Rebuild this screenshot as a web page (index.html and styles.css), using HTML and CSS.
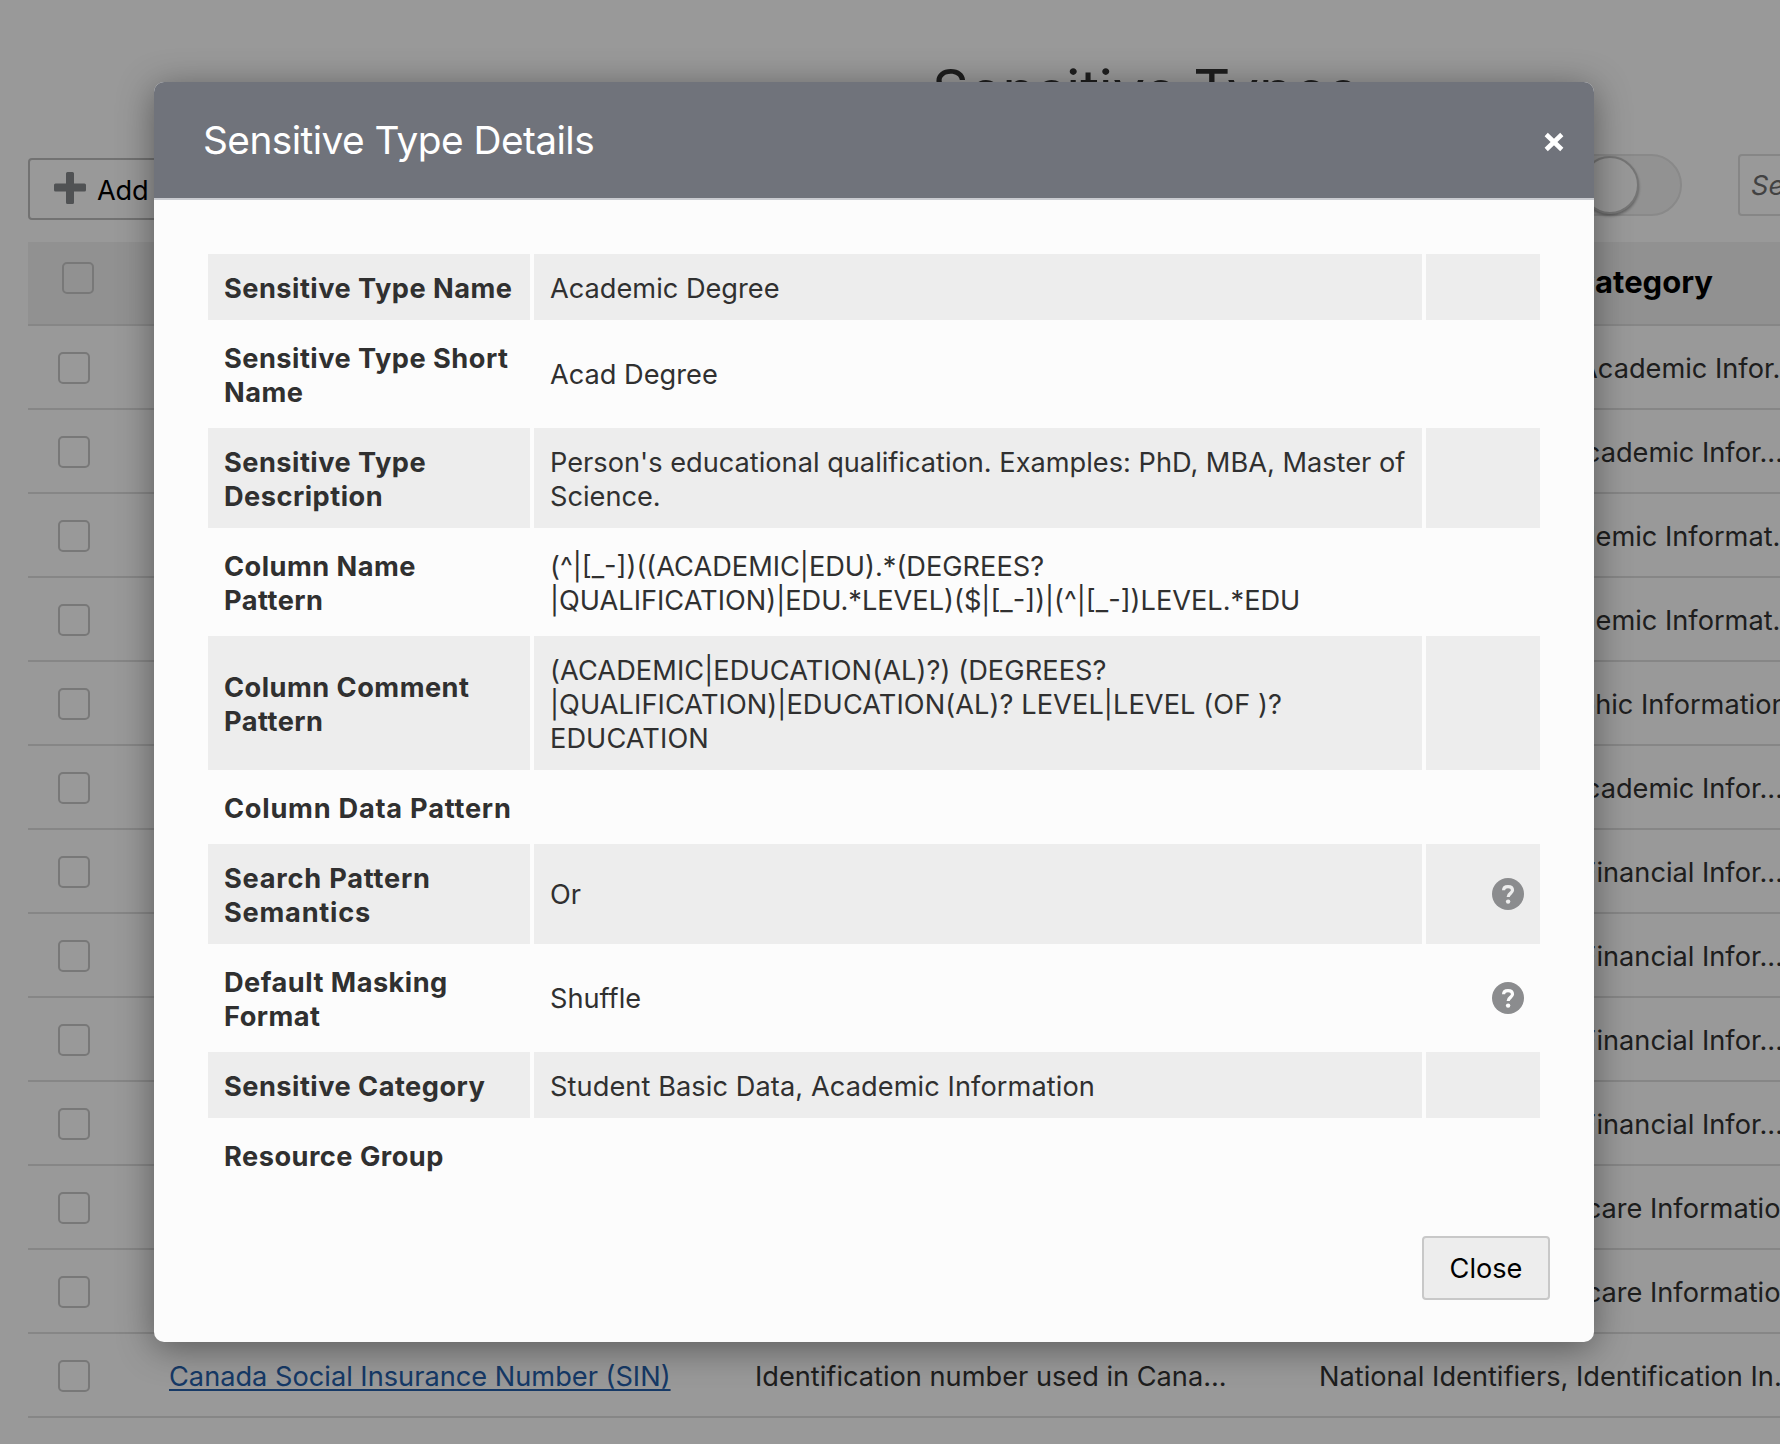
FILE: index.html
```html
<!DOCTYPE html>
<html lang="en">
<head>
<meta charset="utf-8">
<title>Sensitive Types</title>
<link rel="stylesheet" href="styles.css">
</head>
<body>
<main class="page">
  <h1 class="page-title">Sensitive Types</h1>
  <div class="toolbar">
    <button class="add-btn"><svg width="32" height="32" viewBox="0 0 32 32"><path d="M13.500 0h5a1.500 1.500 0 0 1 1.500 1.500V11.500h10.500a1.500 1.500 0 0 1 1.500 1.500v5a1.500 1.500 0 0 1-1.500 1.500H20V30.500a1.500 1.500 0 0 1-1.500 1.500h-5a1.500 1.500 0 0 1-1.500-1.500V19.500H1.500A1.500 1.500 0 0 1 0 18v-5a1.500 1.500 0 0 1 1.500-1.500H12V1.500A1.500 1.500 0 0 1 13.500 0z" fill="#85898c"/></svg><span>Add</span></button>
    <div class="toggle"><span class="knob"></span></div>
    <div class="search">Search</div>
  </div>
  <div class="list">
    <div class="list-head"><span class="check"></span><span class="head-cat">Category</span></div>
    <div class="list-row"><span class="check"></span><span class="cat"><span class="lead at-a">Academic </span>Infor...</span></div>
    <div class="list-row"><span class="check"></span><span class="cat"><span class="lead at-b">Academic </span>Infor...</span></div>
    <div class="list-row"><span class="check"></span><span class="cat"><span class="lead at-c">Academic </span>Informat...</span></div>
    <div class="list-row"><span class="check"></span><span class="cat"><span class="lead at-c">Academic </span>Informat...</span></div>
    <div class="list-row"><span class="check"></span><span class="cat"><span class="lead at-d">Demographic </span>Information</span></div>
    <div class="list-row"><span class="check"></span><span class="cat"><span class="lead at-b">Academic </span>Infor...</span></div>
    <div class="list-row"><span class="check"></span><span class="cat"><span class="lead at-b">Financial </span>Infor...</span></div>
    <div class="list-row"><span class="check"></span><span class="cat"><span class="lead at-b">Financial </span>Infor...</span></div>
    <div class="list-row"><span class="check"></span><span class="cat"><span class="lead at-b">Financial </span>Infor...</span></div>
    <div class="list-row"><span class="check"></span><span class="cat"><span class="lead at-b">Financial </span>Infor...</span></div>
    <div class="list-row"><span class="check"></span><span class="cat"><span class="lead at-e">Healthcare </span>Information</span></div>
    <div class="list-row"><span class="check"></span><span class="cat"><span class="lead at-e">Healthcare </span>Information</span></div>
    <div class="list-row"><span class="check"></span><a class="name">Canada Social Insurance Number (SIN)</a><span class="desc">Identification number used in Cana...</span><span class="cat ident">National Identifiers, Identification In...</span></div>
  </div>
</main>
<div class="overlay">
  <section class="dialog">
    <header class="dialog-head">
      <h2 class="dialog-title">Sensitive Type Details</h2>
      <svg class="dialog-x" width="22" height="22" viewBox="0 0 22 22"><path d="M3.200 3.500l15.600 15M18.800 3.500l-15.600 15" stroke="#fff" stroke-width="4.600" fill="none"/></svg>
    </header>
    <div class="details">
      <div class="row shade"><div class="label">Sensitive Type Name</div><div class="value">Academic Degree</div><div class="help"></div></div>
      <div class="row mid"><div class="label">Sensitive Type Short<br>Name</div><div class="value">Acad Degree</div><div class="help"></div></div>
      <div class="row shade"><div class="label">Sensitive Type<br>Description</div><div class="value">Person's educational qualification. Examples: PhD, MBA, Master of<br>Science.</div><div class="help"></div></div>
      <div class="row"><div class="label">Column Name<br>Pattern</div><div class="value">(^|[_-])((ACADEMIC|EDU).*(DEGREES?<br>|QUALIFICATION)|EDU.*LEVEL)($|[_-])|(^|[_-])LEVEL.*EDU</div><div class="help"></div></div>
      <div class="row shade"><div class="label">Column Comment<br>Pattern</div><div class="value roomy">(ACADEMIC|EDUCATION(AL)?) (DEGREES?<br>|QUALIFICATION)|EDUCATION(AL)? LEVEL|LEVEL (OF )?<br>EDUCATION</div><div class="help"></div></div>
      <div class="row"><div class="label wide">Column Data Pattern</div><div class="value"></div><div class="help"></div></div>
      <div class="row shade mid"><div class="label wide">Search Pattern<br>Semantics</div><div class="value">Or</div><div class="help"><svg width="32" height="32" viewBox="0 0 32 32"><circle cx="16" cy="16" r="16" fill="#8b8c8e"/><path d="M11.600 12.300C11.600 9.900 13.400 8.700 16 8.700s4.500 1.300 4.500 3.600c0 3-4.300 3.200-4.300 6.600" fill="none" stroke="#ededed" stroke-width="3.200"/><circle cx="16.100" cy="23.600" r="2.200" fill="#ededed"/></svg></div></div>
      <div class="row mid"><div class="label">Default Masking<br>Format</div><div class="value">Shuffle</div><div class="help"><svg width="32" height="32" viewBox="0 0 32 32"><circle cx="16" cy="16" r="16" fill="#8b8c8e"/><path d="M11.600 12.300C11.600 9.900 13.400 8.700 16 8.700s4.500 1.300 4.500 3.600c0 3-4.300 3.200-4.300 6.600" fill="none" stroke="#fcfcfc" stroke-width="3.200"/><circle cx="16.100" cy="23.600" r="2.200" fill="#fcfcfc"/></svg></div></div>
      <div class="row shade"><div class="label">Sensitive Category</div><div class="value roomy">Student Basic Data, Academic Information</div><div class="help"></div></div>
      <div class="row"><div class="label">Resource Group</div><div class="value"></div><div class="help"></div></div>
    </div>
    <footer class="dialog-foot"><button class="close-btn">Close</button></footer>
  </section>
</div>
</body>
</html>
```
FILE: styles.css
```css
* { box-sizing: border-box; }
body {
  margin: 0;
  width: 1780px;
  height: 1444px;
  overflow: hidden;
  background: #fff;
  color: #333;
  font: 27.2px/34px Inter, "Liberation Sans", sans-serif;
}
button { font: inherit; color: #000; }
h1, h2 { margin: 0; font-weight: 400; }

.page { width: 1780px; height: 1444px; overflow: hidden; padding-top: 60px; }
.page-title { padding-left: 932px; font-size: 57.5px; line-height: 60px; letter-spacing: -0.1px; height: 94px; }

.toolbar { display: flex; align-items: flex-start; height: 88px; padding-left: 28px; }
.toolbar > * { flex: none; }
.add-btn {
  display: flex;
  align-items: flex-start;
  gap: 11px;
  width: 170px;
  height: 62px;
  margin-top: 4px;
  padding: 12px 24px 0;
  border: 2px solid #bebebe;
  border-radius: 4px;
  background: #fff;
}
.add-btn svg { flex: none; }
.add-btn span { padding-top: 2px; letter-spacing: -0.2px; }
.toggle {
  display: flex;
  width: 124px;
  height: 62px;
  margin-left: 1360px;
  padding-left: 21px;
  border: 2px solid #e4e4e4;
  border-radius: 31px;
  background: #f4f4f4;
}
.knob {
  width: 58px;
  height: 58px;
  border: 2px solid #c4c4c4;
  border-radius: 50%;
  background: #fdfdfd;
  box-shadow: 0 2px 3px rgba(0, 0, 0, 0.35);
}
.search {
  width: 300px;
  height: 62px;
  margin-left: 56px;
  padding: 13px 0 0 11px;
  border: 2px solid #e0e0e0;
  border-radius: 4px;
  color: #6f6f6f;
  font-style: italic;
}

.list { width: 1752px; margin-left: 28px; }
.list-head, .list-row { display: flex; height: 84px; border-bottom: 2px solid #e0e0e0; white-space: pre; }
.list-head > *, .list-row > * { flex: none; }
.list-head { background: #f2f2f2; }
.check { width: 32px; height: 32px; border: 2px solid #c8c8c8; border-radius: 5px; }
.list-head .check { margin: 20px 0 0 34px; }
.list-row .check { margin: 26px 0 0 30px; }
.head-cat { width: 1619px; padding-top: 23px; text-align: right; color: #000; font-size: 31px; font-weight: 700; }
.list-row .name, .list-row .desc, .cat { padding-top: 26px; }
.name {
  width: 586px;
  margin-left: 79px;
  color: #2560ab;
  text-decoration: underline;
  text-decoration-thickness: 2px;
  text-underline-offset: 3px;
}
.desc { width: 564px; }
.cat { display: flex; margin-left: 1229px; }
.cat.ident { margin-left: 0; }
.lead { display: flex; justify-content: flex-end; }
.at-a { width: 396px; }
.at-b { width: 383px; }
.at-c { width: 346px; }
.at-d { width: 322px; }
.at-e { width: 331px; }

.overlay { position: absolute; inset: 0; padding: 82px 154px 0; background: rgba(0, 0, 0, 0.4); }
.dialog {
  width: 1440px;
  height: 1260px;
  border-radius: 10px;
  overflow: hidden;
  background: #fcfcfc;
  box-shadow: 0 6px 36px rgba(0, 0, 0, 0.42);
  color: #303030;
}
.dialog-head {
  display: flex;
  align-items: center;
  justify-content: space-between;
  height: 118px;
  padding: 0 29px 0 49px;
  border-bottom: 2px solid #c9cbd0;
  background: #70737b;
}
.dialog-title { color: #fff; font-size: 38.8px; line-height: 48px; letter-spacing: -0.55px; }
.dialog-x { margin-top: 4px; }
.details { display: grid; gap: 4px; padding: 54px 54px 0; }
.row { display: grid; grid-template-columns: 322px 888px 114px; gap: 4px; }
.row > div { display: flex; align-items: center; padding: 18px 16px 14px; min-height: 66px; white-space: nowrap; }
.row.mid > .value { padding: 17px 16px 15px; }
.row > .help { justify-content: flex-end; padding: 0 16px; }
.shade > div { background: #ededed; }
.label { font-weight: 700; letter-spacing: 0.48px; }
.label.wide { letter-spacing: 0.76px; }
.value.roomy { letter-spacing: 0.08px; }
.dialog-foot { display: flex; justify-content: flex-end; padding: 48px 44px 0; }
.close-btn {
  width: 128px;
  height: 64px;
  padding: 1px 0 0;
  border: 2px solid #c8c8c8;
  border-radius: 4px;
  background: #ededed;
}
```
